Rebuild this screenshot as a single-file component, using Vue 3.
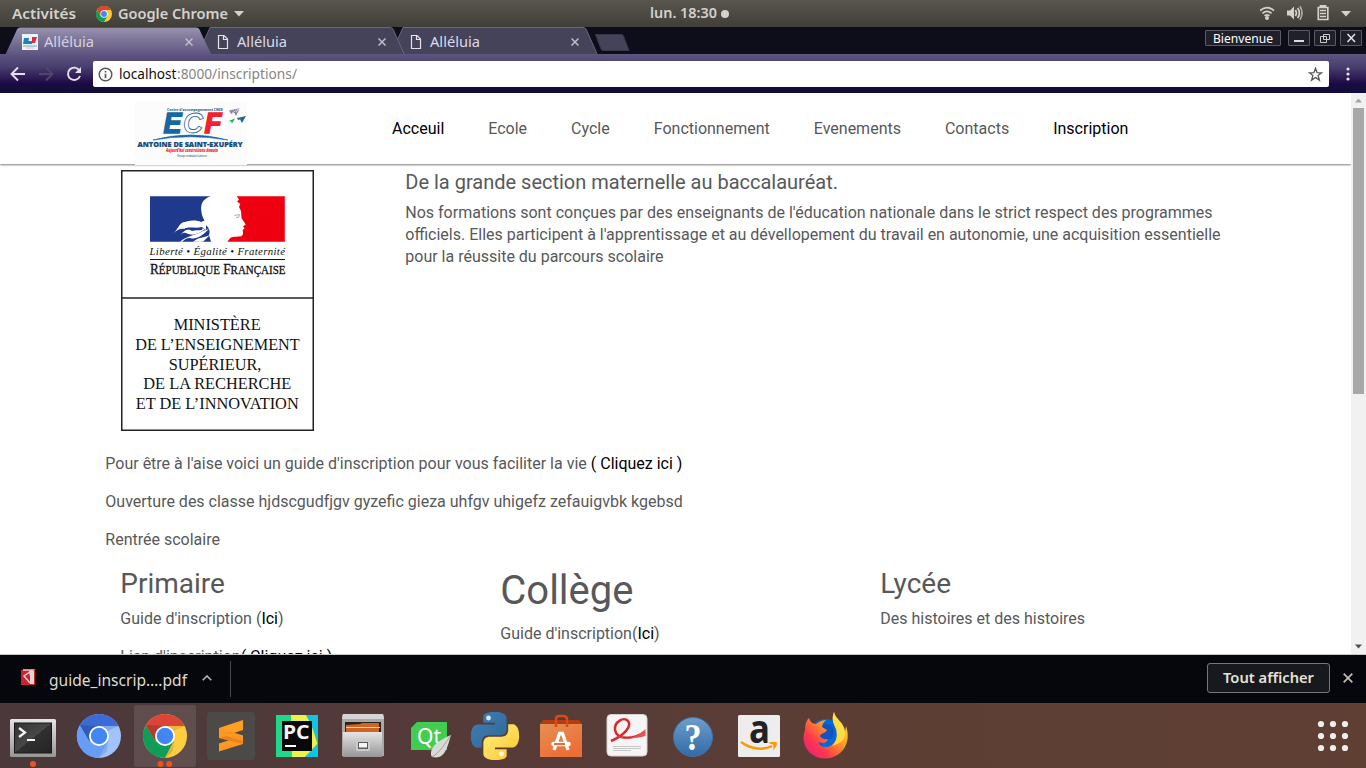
<script setup>
import { h } from 'vue'

// Single-line label stretched to a fixed width, for the desktop UI font.
const Label = (p) =>
  h('svg', { width: p.w, height: p.h, style: 'display:block;flex:none;overflow:visible' }, [
    h('text', {
      x: 0, y: p.y, fill: p.fill || '#dfdbd2', 'font-size': p.size || 15,
      'font-weight': p.weight || 400, textLength: p.w, lengthAdjust: 'spacingAndGlyphs',
      'font-family': '"Noto Sans", "Open Sans", sans-serif'
    }, p.text)
  ])
Label.props = ['text', 'w', 'h', 'y', 'size', 'fill', 'weight']

const nav = ['Acceuil', 'Ecole', 'Cycle', 'Fonctionnement', 'Evenements', 'Contacts', 'Inscription']
const dark = ['Acceuil', 'Inscription']
const tabs = [
  { active: true, cls: 'first' },
  { active: false, cls: 'next' },
  { active: false, cls: 'next' }
]
const ministry = [
  ['MINISTÈRE', 173.7, 87, 330.3],
  ['DE L’ENSEIGNEMENT', 135.2, 164.5, 350],
  ['SUPÉRIEUR,', 168.7, 92.7, 369.7],
  ['DE LA RECHERCHE', 143.3, 148, 389.3],
  ['ET DE L’INNOVATION', 135.7, 163, 408.7]
]
const pythonHalf = 'M14.25.18l.9.2.73.26.59.3.45.32.34.34.25.34.16.33.1.3.04.26.02.2-.01.13V8.5l-.05.63-.13.55-.21.46-.26.38-.3.31-.33.25-.35.19-.35.14-.33.1-.3.07-.26.04-.21.02H8.77l-.69.05-.59.14-.5.22-.41.27-.33.32-.27.35-.2.36-.15.37-.1.35-.07.32-.04.27-.02.21v3.06H3.17l-.21-.03-.28-.07-.32-.12-.35-.18-.36-.26-.36-.36-.35-.46-.32-.59-.28-.73-.21-.88-.14-1.05-.05-1.23.06-1.22.16-1.04.24-.87.32-.71.36-.57.4-.44.42-.33.42-.24.4-.16.36-.1.32-.05.24-.01h.16l.06.01h8.16v-.83H6.18l-.01-2.75-.02-.37.05-.34.11-.31.17-.28.25-.26.31-.23.38-.2.44-.18.51-.15.58-.12.64-.1.71-.06.77-.04.84-.02 1.27.05z'
</script>

<template>
  <div class="screen">
    <header class="topbar">
      <Label class="act" text="Activités" :w="64" :h="27" :y="19" :size="14.5" weight="600" fill="#d3d2cd" />
      <svg class="mini" width="16" height="16" viewBox="-22 -22 44 44">
        <circle r="22" fill="#fc3" />
        <path d="M-19.1 -11A22 22 0 0 1 19.1 -11H0L-9.5 5.5Z" fill="#db4437" />
        <path d="M-19.1 -11A22 22 0 0 0 0 22L9.5 5.5H-9.5Z" fill="#0f9d58" />
        <circle r="10" fill="#fff" /><circle r="8" fill="#4285f4" />
      </svg>
      <Label text="Google Chrome" :w="110" :h="27" :y="19" :size="14.5" weight="600" fill="#d3d2cd" />
      <svg class="caret" width="10" height="6"><path d="M0 0H10L5 5.5Z" fill="#d3d2cd" /></svg>
      <Label class="clock" text="lun. 18:30" :w="67" :h="27" :y="18" :size="14.5" weight="600" fill="#d3d2cd" />
      <svg class="dot" width="8" height="8"><circle cx="4" cy="4" r="4" fill="#d3d2cd" /></svg>
      <svg class="status" width="106" height="27" viewBox="1260 0 106 27">
        <g fill="none" stroke="#d3d2cd" stroke-width="1.7">
          <path d="M1260 10.7Q1267 4.5 1274 10.7" /><path d="M1262.4 13.4Q1267 9.4 1271.6 13.4" /><path d="M1264.5 15.8Q1267 13.8 1269.5 15.8" />
          <path d="M1295.4 10Q1297.5 13 1295.4 16" /><path d="M1297.7 8Q1301 13 1297.7 18" /><path d="M1300 6.3Q1304 13 1300 19.7" stroke="#aaa9a4" />
          <path d="M1318.3 7.5H1327.8V19.5H1318.3ZM1320.5 7V5.8H1325.5V7M1320 10.5H1326M1320 13.5H1326M1320 16.5H1326" stroke-width="1.7" />
        </g>
        <g fill="#d3d2cd"><circle cx="1267" cy="18" r="2" /><path d="M1287 10.5H1290L1294 6.5V19.5L1290 15.5H1287ZM1341 11H1351L1346 16.5Z" /></g>
      </svg>
    </header>

    <section class="browser">
      <div class="tabstrip">
        <svg class="tabshapes" width="1366" height="28" viewBox="0 27 1366 28">
          <defs><linearGradient id="tabg" x1="0" y1="0" x2="0" y2="1"><stop offset="0" stop-color="#9891ad" /><stop offset="1" stop-color="#5d5380" /></linearGradient></defs>
          <path d="M404 55L397 41L403 27.5H583Q585.500 27.500 586.500 30L597.500 55Z" fill="#45435a" stroke="#69677b" />
          <path d="M211 55L204 41L210 27.5H390Q392.500 27.500 393.500 30L404.500 55Z" fill="#45435a" stroke="#69677b" />
          <path d="M0 54.5H6M211 54.5H1366" stroke="#5d577e" />
          <path d="M5 55.500L17 29.500Q18 27.500 20 27.500H196.500Q198.500 27.500 199.500 29.500L211.500 55.500Z" fill="url(#tabg)" />
          <path d="M595.500 34.500H621Q623 34.500 623.500 36L629 50.500H603Q601.500 50.500 601 49Z" fill="#45435a" stroke="#38374a" />
        </svg>
        <div v-for="(t, i) in tabs" :key="i" class="tab" :class="t.cls">
          <svg v-if="t.active" class="fav" width="16" height="16">
            <rect width="16" height="16" fill="#e9f5fb" /><path d="M2 4H7L6 10H1ZM6 7H10V10H6Z" fill="#267dbf" /><path d="M10 3H15L13 9H10Z" fill="#ed2635" /><path d="M1 12H15" stroke="#6fa6ca" /><path d="M4 14H12" stroke="#f3b4bb" />
          </svg>
          <svg v-else class="fav" width="16" height="16"><path d="M3.500 1.500H9L12.500 5V14.500H3.500ZM8.500 1.500V5.500H12.500" fill="none" stroke="#e4e3ea" stroke-width="1.200" /></svg>
          <Label text="Alléluia" :w="50" :h="28" :y="19" :size="15" :fill="t.active ? '#d5d1df' : '#dcdbe6'" />
          <svg class="x" width="8" height="8"><path d="M.5 .5L7.500 7.500M7.500 .5L.5 7.500" stroke="#c0bdcc" stroke-width="1.500" /></svg>
        </div>
        <div class="wm">
          <div class="btn welcome"><Label text="Bienvenue" :w="60" :h="15" :y="12" :size="12.5" fill="#fff" /></div>
          <div class="btn"><svg width="20" height="14"><path d="M5 10H15" stroke="#ddd" stroke-width="2" /></svg></div>
          <div class="btn"><svg width="20" height="14" fill="none" stroke="#ccc"><path d="M8.500 3.500H14.500V8.500H8.500ZM5.500 5.500H11.500V11.500H5.500Z" /></svg></div>
          <div class="btn"><svg width="20" height="14"><path d="M6.500 3L14 11M14 3L6.500 11" stroke="#e6e6e6" stroke-width="1.500" /></svg></div>
        </div>
      </div>

      <div class="toolbar">
        <svg class="navicons" width="93" height="38" viewBox="0 55 93 38" fill="none" stroke-width="1.900">
          <path d="M25 74H12M18 67.500L11.500 74L18 80.500" stroke="#e4e1ea" />
          <path d="M39 74H52M46 67.500L52.500 74L46 80.500" stroke="#50456d" />
          <path d="M79.300 70.300A6.200 6.200 0 1 0 80 76" stroke="#e4e1ea" /><path d="M81 67V73H75Z" fill="#e4e1ea" />
        </svg>
        <div class="omnibox">
          <svg width="15" height="15" class="info"><circle cx="7.500" cy="7.500" r="6.300" fill="none" stroke="#5a5a5a" stroke-width="1.500" /><path d="M7.500 4V5.500M7.500 6.700V11.300" stroke="#5a5a5a" stroke-width="1.700" /></svg>
          <Label text="localhost" :w="57.500" :h="26" :y="18" :size="14" fill="#111" />
          <Label text=":8000/inscriptions/" :w="120" :h="26" :y="18" :size="14" fill="#858585" />
          <svg class="star" width="15" height="15" viewBox="0 0 15 15"><path d="M7.500 1.200L9.100 5.600L13.700 5.800L10.100 8.600L11.400 13.100L7.500 10.500L3.600 13.100L4.900 8.600L1.300 5.800L5.900 5.600Z" fill="none" stroke="#555" stroke-width="1.300" /></svg>
        </div>
        <svg class="dots" width="4" height="14" fill="#e4e1ea"><circle cx="2" cy="2" r="1.600" /><circle cx="2" cy="7" r="1.600" /><circle cx="2" cy="12" r="1.600" /></svg>
      </div>

      <div class="viewport">
        <main class="page">
          <div class="sitehead">
            <svg class="logo" width="112" height="64" viewBox="135 101 112 64">
              <rect x="135" y="101" width="112" height="64" fill="#fcfcfc" />
              <g font-family="'Open Sans', sans-serif" font-weight="800">
                <text x="167" y="111" font-size="3.800" fill="#3b7293" textLength="56" lengthAdjust="spacingAndGlyphs">Centre d'accompagnement CNED</text>
                <g font-family="'Liberation Sans', sans-serif" font-style="italic" font-weight="700" font-size="29">
                  <text x="163.500" y="133.300" fill="#1767a2" stroke="#1767a2" stroke-width="1.500" textLength="18" lengthAdjust="spacingAndGlyphs">E</text>
                  <text x="183" y="133.300" fill="#fff" stroke="#1767a2" stroke-width=".8" textLength="20" lengthAdjust="spacingAndGlyphs">C</text>
                  <text x="204.500" y="133.300" fill="#f4202b" stroke="#f4202b" stroke-width="1.500" textLength="17" lengthAdjust="spacingAndGlyphs">F</text>
                </g>
                <path d="M153 140Q190 130 228 140Q190 133.500 153 140Z" fill="#1767a2" stroke="#1767a2" stroke-width=".6" />
                <text x="137.500" y="147" font-size="7.500" fill="#124b7d" stroke="#124b7d" stroke-width=".2" textLength="105" lengthAdjust="spacingAndGlyphs">ANTOINE DE SAINT-EXUPÉRY</text>
                <text x="166" y="152" font-size="4.500" font-style="italic" fill="#f4202b" textLength="52" lengthAdjust="spacingAndGlyphs">Aujourd'hui construisons demain</text>
                <text x="177" y="156.500" font-size="3" font-weight="400" fill="#24536b" textLength="30">Groupe institution Lamson</text>
              </g>
              <path d="M229 110.500L240 108L236 116L234 112.500L231 114Z" fill="#8c8ca5" /><path d="M232 113L240 108L236 112" stroke="#fff" stroke-width=".5" fill="none" />
              <path d="M237 118L246 116L242 123L240 119.500L238 120Z" fill="#236a98" /><path d="M228.500 121L235 118.500L232 123.500L231 121.500Z" fill="#24b058" />
            </svg>
            <nav><a v-for="n in nav" :key="n" :class="{ dark: dark.includes(n) }">{{ n }}</a></nav>
          </div>

          <div class="content">
            <div class="intro">
              <svg class="republic" width="193" height="261" viewBox="121 170 193 261" font-family="'Liberation Serif', serif" fill="#111">
                <rect x="121.750" y="170.750" width="191.500" height="259.500" fill="#fff" stroke="#222" stroke-width="1.500" />
                <path d="M122 298H313" stroke="#222" stroke-width="1.500" />
                <path d="M150 196.300H210.700C203 199 200 204 201.500 212C202 218 206 221 205 224C208 227 211 230 209 235L211 241.700H150Z" fill="#1f3a8c" />
                <g fill="#fff">
                  <path d="M174 233C179 227 180 222 185 222C191 220 197 220 201 222L206 220V230L202 227C195 229 190 226 185 229C180 228 177 230 174 233Z" />
                  <path d="M179 237C183 231 188 227 192 231L201 229L207 228C199 233 194 237 186 233C183 232 181 234 179 237Z" />
                  <path d="M180 241.700C188 235 195 236 203 231L209 229C202 236 196 240 190 238C186 238 184 240 182 241.700ZM193 241.700C199 237 203 238 210 235L203 241.700Z" />
                </g>
                <path d="M185 229C190 227 196 231 202 229" stroke="#1f3a8c" fill="none" stroke-width="1.600" />
                <path d="M284.800 196.300H236.700L239 199.500L237 201.500L240.300 204L239 207L241 211L241.500 218L245.700 224.500L243 226.300L244.500 228.500L242.700 230L243 233C243 238 238 236 233 237C230 237 229 240 227.500 241.700H284.800Z" fill="#ef0011" />
                <path d="M234.500 215.500L239.500 214.500L238.500 217.500L236 217" stroke="#999" stroke-width=".8" fill="none" />
                <text x="149.500" y="255" font-size="10.800" font-style="italic" textLength="135.500">Liberté • Égalité • Fraternité</text>
                <path d="M150 259.500H285" stroke="#111" />
                <text x="150" y="273.500" font-size="14.500" stroke="#111" stroke-width=".3" textLength="135.500" lengthAdjust="spacingAndGlyphs">R<tspan font-size="12">ÉPUBLIQUE</tspan> F<tspan font-size="12">RANÇAISE</tspan></text>
                <text v-for="m in ministry" :key="m[0]" :x="m[1]" :y="m[3]" font-size="17" :textLength="m[2]" lengthAdjust="spacingAndGlyphs">{{ m[0] }}</text>
              </svg>
              <div class="blurb">
                <h5>De la grande section maternelle au baccalauréat.</h5>
                <p>Nos formations sont conçues par des enseignants de l'éducation nationale dans le strict respect des programmes<br>officiels. Elles participent à l'apprentissage et au dévellopement du travail en autonomie, une acquisition essentielle<br>pour la réussite du parcours scolaire</p>
              </div>
            </div>
            <p>Pour être à l'aise voici un guide d'inscription pour vous faciliter la vie <a class="dark">( Cliquez ici )</a></p>
            <p>Ouverture des classe hjdscgudfjgv gyzefic gieza uhfgv uhigefz zefauigvbk kgebsd</p>
            <p>Rentrée scolaire</p>
            <div class="levels">
              <div><h3>Primaire</h3><p>Guide d'inscription (<a class="dark">Ici</a>)</p><p>Lien d'inscription<a class="dark">( Cliquez ici )</a></p></div>
              <div><h1>Collège</h1><p>Guide d'inscription(<a class="dark">Ici</a>)</p></div>
              <div><h3>Lycée</h3><p>Des histoires et des histoires</p></div>
            </div>
          </div>
        </main>
        <div class="scroll">
          <svg width="15" height="15"><path d="M4 9.500H11L7.500 5.500Z" fill="#a3a3a3" /></svg>
          <div class="thumb"></div>
          <svg width="15" height="15"><path d="M4 5.500H11L7.500 9.500Z" fill="#505050" /></svg>
        </div>
      </div>

      <div class="downloads">
        <svg class="pdf" width="15" height="17"><rect y="1" width="14" height="15" fill="#c9232f" /><path d="M2 1L12 1L3 7L9 14" fill="none" stroke="#f3c9cd" stroke-width="1.500" /><path d="M8 2H13V15H9V8Z" fill="#dcd8d8" /></svg>
        <Label text="guide_inscrip….pdf" :w="138" :h="48" :y="31" :size="16" fill="#dedbd0" />
        <svg class="chev" width="10" height="6"><path d="M.7 5.300L5 1L9.300 5.300" fill="none" stroke="#b9b5ac" stroke-width="1.600" /></svg>
        <i class="sep"></i>
        <div class="showall"><Label text="Tout afficher" :w="91" :h="28" :y="19" :size="14.5" weight="600" fill="#e5e2d8" /></div>
        <svg class="close" width="10" height="10"><path d="M.7 .7L9.300 9.300M9.300 .7L.7 9.300" stroke="#c3beb4" stroke-width="1.700" /></svg>
      </div>
    </section>

    <footer class="dock">
      <svg viewBox="-33 -33 66 65">
        <defs>
          <linearGradient id="steel" x1="0" y1="0" x2="0" y2="1"><stop offset="0" stop-color="#e5e5e5" /><stop offset="1" stop-color="#969696" /></linearGradient>
          <linearGradient id="term" x1="0" y1="0" x2="1" y2="1"><stop offset="0" stop-color="#333" /><stop offset=".5" stop-color="#484848" /><stop offset=".5" stop-color="#303030" /><stop offset="1" stop-color="#252525" /></linearGradient>
        </defs>
        <rect x="-23" y="-17" width="46" height="38" rx="1.500" fill="url(#steel)" /><rect x="-19" y="-13.500" width="38" height="31" fill="#181818" /><rect x="-18" y="-12.500" width="36" height="29" fill="url(#term)" />
        <path d="M-14 -8L-8 -3.500L-14 1M-6 4H2" fill="none" stroke="#f4f4f4" stroke-width="2.200" /><circle cy="28" r="3" fill="#e95420" />
      </svg>
      <svg viewBox="-33 -33 66 65">
        <circle r="22" fill="#a1c2fa" /><path d="M-19.100 -11A22 22 0 0 1 19.600 -10H0L-9.500 5.500Z" fill="#3d6bd6" /><path d="M-19.100 -11A22 22 0 0 0 0 22L9.500 5.500H-9.500Z" fill="#669df6" /><path d="M-19.100 -11L-9.500 5.500L-10 -2L0 -10Z" fill="#315bb9" /><path d="M0 -10H19.600L8.500 -5Z" fill="#80a7ec" /><path d="M9 4L8 15L0 22Z" fill="#85aceb" /><circle r="10" fill="#fff" /><circle r="8.200" fill="#4285f4" />
      </svg>
      <svg viewBox="-33 -33 66 65">
        <rect x="-31" y="-31" width="62" height="62" rx="3" fill="#fff" fill-opacity=".1" />
        <circle r="22" fill="#ffcd40" /><path d="M-19.100 -11A22 22 0 0 1 19.600 -10H0L-9.500 5.500Z" fill="#db4437" /><path d="M-19.100 -11A22 22 0 0 0 0 22L9.500 5.500H-9.500Z" fill="#0f9d58" /><path d="M-19.100 -11L-9.500 5.500L-10 -2L0 -10Z" fill="#b63931" /><path d="M0 -10H19.600L8.500 -5Z" fill="#efb735" /><path d="M9 4L8 15L0 22Z" fill="#dfb23a" /><circle r="10" fill="#fff" /><circle r="8.200" fill="#4285f4" />
        <circle cx="-4.500" cy="28" r="3" fill="#e95420" /><circle cx="4.200" cy="28" r="3" fill="#e95420" />
      </svg>
      <svg viewBox="-33 -33 66 65">
        <rect x="-24" y="-24" width="48" height="48" rx="3" fill="#4b4a47" /><path d="M-12 -8L12 -16V-6L-12 2Z" fill="#ff9f23" /><path d="M-12 7.500L12 -.5V8L-12 15.500Z" fill="#ff9822" /><path d="M-12 -8L12 -.5V8L-12 2Z" fill="#ff9822" /><path d="M-4 0L12 5V8L-12 2Z" fill="#e87917" opacity=".7" />
      </svg>
      <svg viewBox="-33 -33 66 65">
        <rect x="-21" y="-21" width="42" height="42" fill="#21d789" /><path d="M-6 -21H9L15 -10L21 10L8 21H-5Z" fill="#e9f34a" /><path d="M9 -21H21V6L13 -14ZM8 21L21 7V21Z" fill="#12c3e6" /><rect x="-15" y="-15" width="30" height="30" fill="#080808" />
        <text x="-14" y="2.500" font-family="'Noto Sans', sans-serif" font-weight="700" font-size="19" textLength="26.500" lengthAdjust="spacingAndGlyphs" fill="#f5f5f5">PC</text><path d="M-12 10H-1" stroke="#fff" stroke-width="2" />
      </svg>
      <svg viewBox="-33 -33 66 65">
        <path d="M-20 -22H20L21 -19V20H-21V-19Z" fill="#aaa9a7" /><path d="M-20 -22H20L21 -17H-21Z" fill="#d5d5d5" /><path d="M-18 -14H18V-3H-18Z" fill="#262220" /><path d="M-17 -11L-3 -12L-1 -13H16V-3H-17Z" fill="#d16422" /><path d="M-17 -8.500H17" stroke="#ffd39a" stroke-width="1.200" /><path d="M-20 -4H19V21H-20Z" fill="url(#steel)" />
        <rect x="-7" y="4" width="14" height="11" rx="1.500" fill="#ccc" /><rect x="-5" y="6" width="10" height="7" fill="#5c5b5e" /><rect x="-4" y="7" width="8" height="4.500" fill="#f5f5f5" />
      </svg>
      <svg viewBox="-33 -33 66 65">
        <path d="M-12 -14H18V14H-18V-8Z" fill="#41cd52" /><text x="-12" y="8" font-family="'Noto Sans', sans-serif" font-size="22" fill="#fff" textLength="24" lengthAdjust="spacingAndGlyphs">Qt</text>
        <path d="M22 -1C13 3 1 9 2 19L3 21C16 24 18 12 22 -1Z" fill="#d9d9d8" /><path d="M3 21C10 17 16 8 22 -1" stroke="#919191" fill="none" stroke-width=".8" />
      </svg>
      <svg viewBox="-33 -33 66 65">
        <defs><linearGradient id="pyb" x1="0" y1="0" x2="1" y2="1"><stop offset="0" stop-color="#3d80b8" /><stop offset="1" stop-color="#326692" /></linearGradient><linearGradient id="pyy" x1="1" y1="1" x2="0" y2="0"><stop offset="0" stop-color="#fff37b" /><stop offset="1" stop-color="#ffc331" /></linearGradient></defs>
        <g transform="translate(-24 -24) scale(2)"><path :d="pythonHalf" fill="url(#pyb)" /><path :d="pythonHalf" fill="url(#pyy)" transform="rotate(180 12 12)" /></g><circle cx="-6.500" cy="-18" r="2.400" fill="#d9edf9" /><circle cx="6.500" cy="18" r="2.400" fill="#fffae0" />
      </svg>
      <svg viewBox="-33 -33 66 65">
        <defs><linearGradient id="bag" x1="0" y1="0" x2=".6" y2="1"><stop offset="0" stop-color="#e59054" /><stop offset="1" stop-color="#ed6d36" /></linearGradient></defs>
        <path d="M-21 -12L-18 -16H18L21 -12Z" fill="#b43c12" /><path d="M-21 -12H21V21H-21Z" fill="url(#bag)" /><path d="M-5 -9V-17Q-5 -20 -2 -20H2Q6 -20 6 -17V-9" fill="none" stroke="#d54c17" stroke-width="2.500" />
        <path d="M-7 14L-1.500 -2.500H1.500L7 14" fill="none" stroke="#fff" stroke-width="3.300" /><path d="M-7.500 8H7.500" stroke="#fff" stroke-width="4.500" stroke-linecap="round" /><path d="M-7 8H4" stroke="#ed6d36" stroke-width="2" />
      </svg>
      <svg viewBox="-33 -33 66 65">
        <rect x="-20" y="-21.500" width="40" height="41.500" rx="4" fill="#f5f5f5" stroke="#d5d1d0" /><path d="M-16 5C-2 -1 5 -10 1 -15C-3 -20 -13 -14 -12 -6C-10 4 5 4 18 -4" fill="none" stroke="#d52b2f" stroke-width="2.500" /><path d="M-9 0C-3 5 8 3 18.500 -7V0C8 3 -3 3 -9 0Z" fill="#df5558" /><path d="M-14 10.500H14M-14 12.500H14M-14 14.500H4" stroke="#bcbcbc" stroke-width=".8" />
      </svg>
      <svg viewBox="-33 -33 66 65">
        <defs><linearGradient id="help" x1="0" y1="0" x2="0" y2="1"><stop offset="0" stop-color="#6e9dcc" /><stop offset="1" stop-color="#316ba5" /></linearGradient></defs>
        <circle cy="1" r="19.500" fill="url(#help)" stroke="#3a75b0" /><text x="-8.500" y="14" font-family="'Liberation Serif', serif" font-weight="700" font-size="37" fill="#fff" textLength="17" lengthAdjust="spacingAndGlyphs">?</text>
      </svg>
      <svg viewBox="-33 -33 66 65">
        <rect x="-21" y="-21" width="42" height="42" rx="1.500" fill="#ededed" /><text x="-10" y="6.800" font-family="'Open Sans', sans-serif" font-weight="700" font-size="39" fill="#222" textLength="21" lengthAdjust="spacingAndGlyphs">a</text>
        <path d="M-18 6C-7 14 5 14 13 10" fill="none" stroke="#ff9900" stroke-width="2.500" /><path d="M9 7Q14 5 18 6.500Q18 11 14 14Q15 10 14 8.500Z" fill="#ff9900" />
      </svg>
      <svg viewBox="-33 -33 66 65">
        <defs><linearGradient id="fox" x1="1" y1="0" x2="0" y2="1"><stop offset="0" stop-color="#fff44f" /><stop offset=".4" stop-color="#ff9b22" /><stop offset=".7" stop-color="#ff3750" /><stop offset="1" stop-color="#e31587" /></linearGradient></defs>
        <circle cx="1" r="17" fill="#006cd8" /><circle cx="1" cy="-4" r="8" fill="#253fb5" opacity=".6" />
        <path d="M9 -24C6 -16 9 -12 11 -7C15 5 6 12 -1 11C-5 10 -7 8 -6 6C-2 8 2 7 3 3C-1 4 -4 2 -5 0C-4 -3 0 -2 2 -6L-3 -9C-3 -12 -1 -14 1 -16C-4 -16 -7 -13 -9 -12C-13 -12 -15 -15 -16 -18C-20 -14 -20 -9 -20 -6C-25 8 -16 22 0 22.500C17 22 27 7 21 -10L20 -4C19 -14 10 -17 9 -24Z" fill="url(#fox)" /><path d="M9 -24C6 -16 9 -12 11 -7C13 1 11 6 7 10C15 8 21 3 20 -4C19 -14 10 -17 9 -24Z" fill="#ffe74a" opacity=".8" />
      </svg>
      <svg class="apps" viewBox="-33 -33 66 65" fill="#f0eeec">
        <template v-for="r in [-12, 0, 12]" :key="r"><circle v-for="c in [-12, 0, 12]" :key="c" :cx="c" :cy="r" r="3.100" /></template>
      </svg>
    </footer>
  </div>
</template>

<style>
html, body { margin: 0; background: #000; overflow: hidden; }
</style>

<style scoped>
.screen { width: 1366px; height: 768px; overflow: hidden; display: flex; flex-direction: column; font-family: Roboto, "Liberation Sans", sans-serif; }
.screen svg { display: block; flex: none; }
.topbar { height: 27px; display: flex; align-items: center; background: linear-gradient(#59564e, #403e38); }
.act { margin-left: 12px; }
.mini { margin: 0 6px 0 20px; }
.caret { margin-left: 6px; }
.clock { margin-left: 406px; }
.dot { margin-left: 4px; }
.status { margin-left: auto; }
.browser { height: 676px; display: flex; flex-direction: column; }
.tabstrip { position: relative; height: 28px; background: #0d0e1a; display: flex; align-items: center; flex: none; }
.tabshapes { position: absolute; left: 0; top: 0; }
.tab { position: relative; display: flex; align-items: center; width: 193px; height: 28px; padding-top: 1px; box-sizing: border-box; }
.tab.first { padding-left: 22px; }
.tab.next { padding-left: 22px; }
.fav { margin-right: 6px; }
.x { margin-left: 91px; }
.wm { position: relative; margin-left: auto; display: flex; gap: 4px; padding: 0 4px 6px 0; }
.btn { width: 20px; height: 14px; border: 1px solid #5c5b63; background: #20202b; border-radius: 1px; }
.welcome { width: 74px; margin-right: 3px; display: flex; justify-content: center; }
.toolbar { height: 38px; flex: none; display: flex; align-items: center; background: linear-gradient(#5d5380 0, #4a4070 30%, #1c0845 76%, #120f3c 85%, #110d3a 100%); }
.omnibox { width: 1236px; height: 26px; background: #fff; border-radius: 2px; display: flex; align-items: center; }
.info { margin: 0 6px 0 5px; }
.star { margin: 0 6px 0 auto; }
.dots { margin-left: 17px; }
.viewport { height: 561px; flex: none; display: flex; border-bottom: 1px solid #c9c9c9; background: #fff; overflow: hidden; }
.page { width: 1351px; height: 561px; overflow: hidden; color: #58585a; font-size: 16px; line-height: 22px; }
.sitehead { position: relative; height: 71px; display: flex; align-items: center; box-shadow: 0 1px 2px rgba(0, 0, 0, .5); }
.logo { margin: 8px 0 0 135px; align-self: flex-start; }
nav { display: flex; gap: 44px; margin-left: 145px; }
.dark { color: #000; }
.content { margin: 6px 105px 0 105.3px; }
.intro { display: flex; height: 282.6px; }
.republic { margin-left: 15.7px; }
.blurb { margin-left: 91.300px; white-space: nowrap; }
h1, h3, h5 { margin: 0 0 8px; font-weight: 400; line-height: 1.2; }
h1 { font-size: 40px; }
h3 { font-size: 28px; }
h5 { font-size: 20px; }
p { margin: 0 0 16px; }
.levels { display: grid; grid-template-columns: repeat(3, 380px); padding-left: 15px; }
.scroll { width: 15px; background: #f1f1f1; display: flex; flex-direction: column; align-items: center; }
.thumb { width: 11px; height: 286px; background: #a8a8a8; margin-bottom: auto; }
.downloads { height: 48px; flex: none; display: flex; align-items: center; background: #05070c; }
.pdf { margin: 0 13px 3px 21px; }
.chev { margin: 0 0 2px 15px; }
.sep { width: 1px; height: 36px; margin-left: 18px; background: #4b4b4b; }
.showall { width: 121px; height: 28px; border: 1px solid #77777a; border-radius: 3px; background: #17191d; margin: 0 13px 2px auto; display: flex; justify-content: center; }
.close { margin: 0 13px 2px 0; }
.dock { height: 65px; display: flex; background: linear-gradient(90deg, #4a383b, #573b37 40%, #5e3f33 75%, #603f33); }
.dock svg { width: 66px; height: 65px; }
.dock .apps { margin-left: auto; }
</style>
